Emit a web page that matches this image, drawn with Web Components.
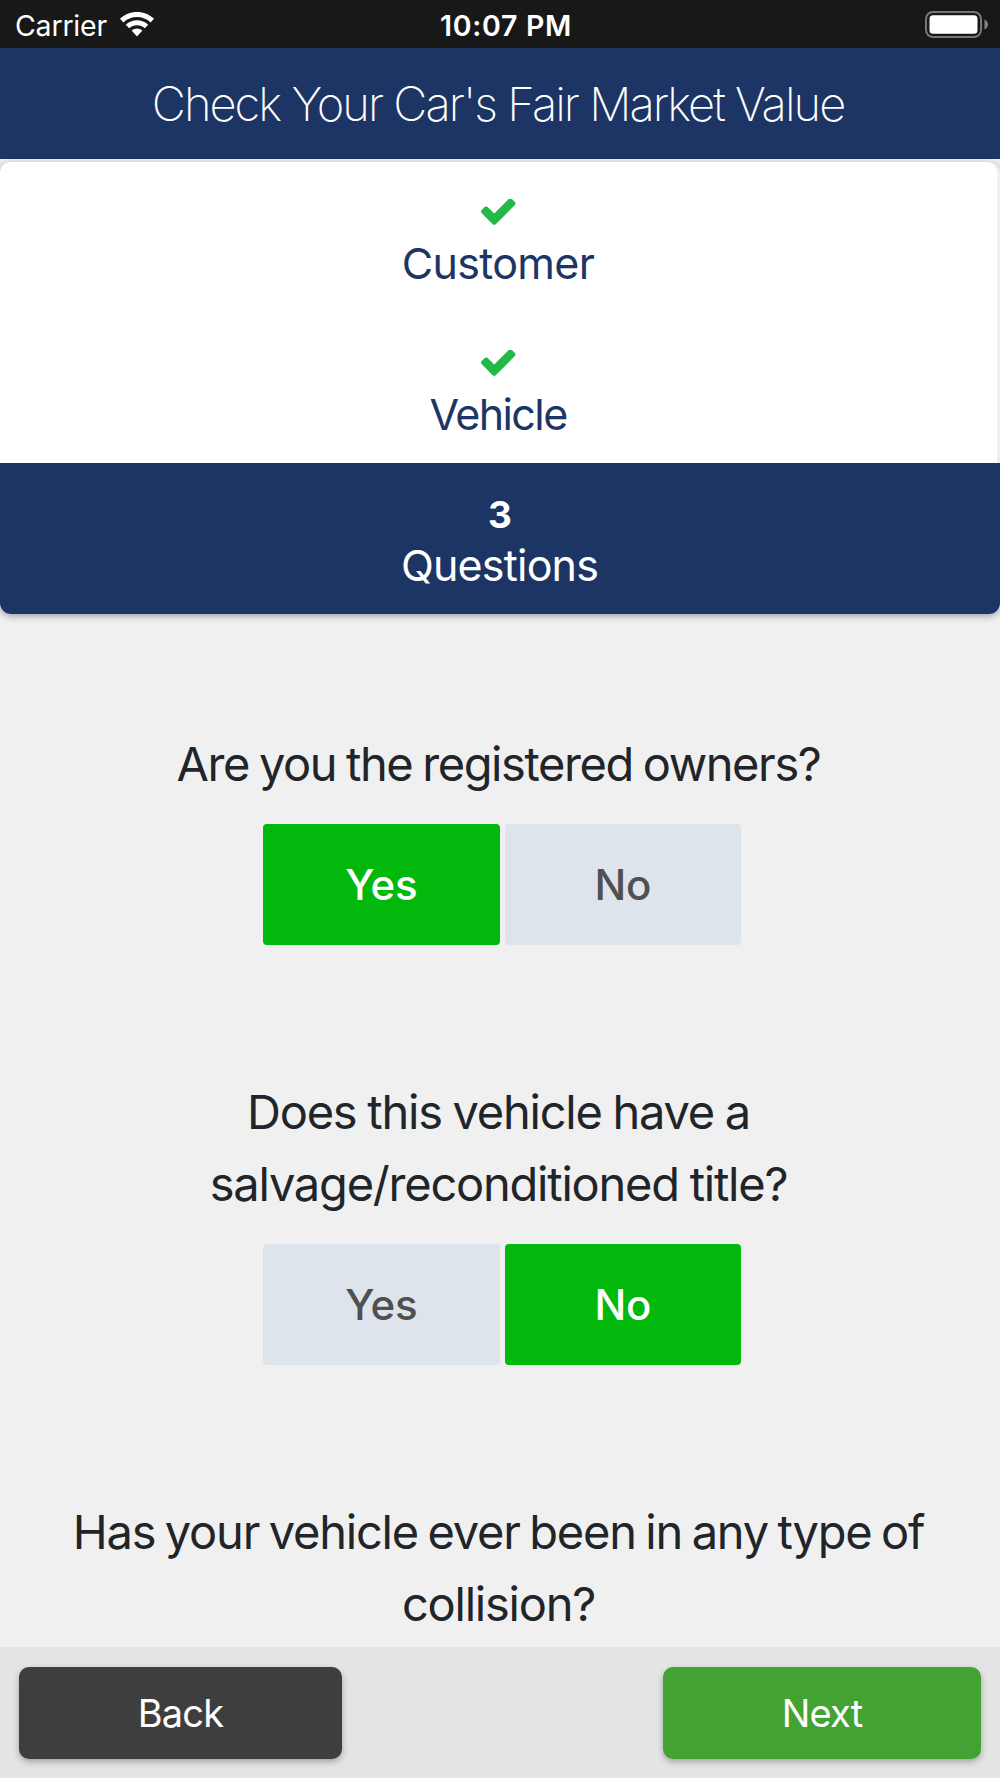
<!DOCTYPE html>
<html lang="en">
<head>
<meta charset="utf-8">
<title>Check Your Car's Fair Market Value</title>
<style>
  html, body {
    margin: 0;
    height: 100%;
  }
  body {
    overflow: hidden;
    background: #f0f0f0;
    color: #212529;
    font-family: Inter, "Liberation Sans", sans-serif;
  }
</style>
</head>
<body>
<market-value-app>
  <status-bar slot="top" carrier="Carrier" time="10:07 PM"></status-bar>
  <page-header slot="top">Check Your Car's Fair Market Value</page-header>
  <step-list slot="top">
    <step-item state="done">Customer</step-item>
    <step-item state="done" style="--tracking: -1.6px">Vehicle</step-item>
    <step-item state="active" number="3" style="--tracking: -0.8px">Questions</step-item>
  </step-list>
  <yes-no-question value="yes" style="--tracking: -1.4px; --word-gap: -2px">Are you the registered owners?</yes-no-question>
  <yes-no-question value="no" style="--word-gap: -1.2px">Does this vehicle have a<br>salvage/reconditioned title?</yes-no-question>
  <yes-no-question>Has your vehicle ever been in any type of<br>collision?</yes-no-question>
  <footer-nav slot="bottom">
    <nav-button slot="back">Back</nav-button>
    <nav-button slot="next" primary>Next</nav-button>
  </footer-nav>
</market-value-app>

<script>
class MarketValueApp extends HTMLElement {
  constructor() {
    super();

    this.attachShadow({ mode: "open" });

    this.shadowRoot.innerHTML = `
      <style>
        :host {
          display: flex;
          flex-direction: column;
          width: 1000px;
          height: 1778px;
        }
        main {
          flex: 1;
          min-height: 0;
          overflow: hidden;
          padding-top: 114px;
        }
      </style>
      <slot name="top"></slot>
      <main><slot></slot></main>
      <slot name="bottom"></slot>
    `;
  }
}

class StatusBar extends HTMLElement {
  constructor() {
    super();

    this.attachShadow({ mode: "open" });

    this.shadowRoot.innerHTML = `
      <style>
        :host {
          display: grid;
          grid-template-columns: 1fr auto 1fr;
          align-items: center;
          flex: none;
          height: 48px;
          padding: 0 12px 0 15px;
          box-sizing: border-box;
          background: #181818;
          color: #fff;
          font-size: 28.5px;
        }
        .left {
          display: flex;
          align-items: center;
          gap: 13px;
        }
        .carrier {
          padding-top: 2px;
          letter-spacing: -0.2px;
        }
        .time {
          font-weight: 600;
          letter-spacing: 0.7px;
          padding: 2px 0 0 9px;
        }
        svg {
          display: block;
        }
        .battery {
          justify-self: end;
        }
      </style>
      <div class="left">
        <span class="carrier"></span>
        <svg width="34" height="25" viewBox="0 0 34 25" fill="#fff">
          <path d="M17 0C10.4 0 4.500 2.600 0 6.800L3.400 10.400C7 7 11.800 5 17 5S27 7 30.600 10.400L34 6.800C29.500 2.600 23.600 0 17 0Z"/>
          <path d="M17 8.300C12.700 8.300 8.800 9.900 5.800 12.700L9.200 16.200C11.300 14.300 14 13.200 17 13.200S22.700 14.300 24.800 16.200L28.200 12.700C25.200 9.900 21.300 8.300 17 8.300Z"/>
          <path d="M17 16.500C14.900 16.500 13 17.300 11.600 18.600L17 24.500L22.400 18.600C21 17.300 19.100 16.500 17 16.500Z"/>
        </svg>
      </div>
      <span class="time"></span>
      <svg class="battery" width="63" height="27" viewBox="0 0 63 27">
        <rect x="1" y="1" width="55" height="25" rx="7" fill="none" stroke="#777" stroke-width="2"/>
        <rect x="4.500" y="4.200" width="48" height="18.600" rx="3.500" fill="#fff"/>
        <path d="M59.500 8.500C64 10.500 64 16.500 59.500 18.500Z" fill="#888"/>
      </svg>
    `;
  }

  connectedCallback() {
    this.shadowRoot.querySelector(".carrier").textContent = this.getAttribute("carrier");
    this.shadowRoot.querySelector(".time").textContent = this.getAttribute("time");
  }
}

class PageHeader extends HTMLElement {
  constructor() {
    super();

    this.attachShadow({ mode: "open" });

    this.shadowRoot.innerHTML = `
      <style>
        :host {
          display: flex;
          align-items: center;
          justify-content: center;
          flex: none;
          height: 111px;
          box-sizing: border-box;
          padding-right: 4px;
          background: #1d3564;
          color: #fff;
          font-size: 47px;
          font-weight: 200;
          letter-spacing: -1.95px;
          white-space: nowrap;
        }
      </style>
      <span><slot></slot></span>
    `;
  }
}

class StepList extends HTMLElement {
  constructor() {
    super();

    this.attachShadow({ mode: "open" });

    this.shadowRoot.innerHTML = `
      <style>
        :host {
          display: block;
          flex: none;
          margin-top: 3px;
          border-radius: 11px;
          box-shadow: 0 2px 7px rgba(0, 0, 0, 0.35);
        }
      </style>
      <slot></slot>
    `;
  }
}

class StepItem extends HTMLElement {
  constructor() {
    super();

    this.attachShadow({ mode: "open" });

    this.shadowRoot.innerHTML = `
      <style>
        :host {
          display: flex;
          flex-direction: column;
          align-items: center;
          box-sizing: border-box;
          width: 997px;
          height: 150.5px;
          padding-top: 31px;
          background: #fff;
          color: #1d3564;
        }
        :host(:first-child) {
          border-radius: 11px 11px 0 0;
        }
        :host([state="active"]) {
          width: 1000px;
          height: 151px;
          padding-top: 32px;
          background: #1d3564;
          color: #fff;
          border-radius: 0 0 11px 11px;
        }
        .mark {
          display: flex;
          align-items: center;
          height: 38px;
          font-size: 37px;
          font-weight: 700;
        }
        .label {
          padding-right: 1px;
          font-size: 43px;
          line-height: 64px;
          letter-spacing: var(--tracking, -0.65px);
        }
      </style>
      <div class="mark"></div>
      <div class="label"><slot></slot></div>
    `;
  }

  connectedCallback() {
    const mark = this.shadowRoot.querySelector(".mark");

    if (this.getAttribute("state") === "done") {
      mark.innerHTML = `
        <svg width="34.5" height="26" viewBox="121 374 1550 1148" fill="#22ba46">
          <path d="M1671 566q0 40-28 68l-724 724-136 136q-28 28-68 28t-68-28l-136-136-362-362q-28-28-28-68t28-68l136-136q28-28 68-28t68 28l294 295 656-657q28-28 68-28t68 28l136 136q28 28 28 68z"/>
        </svg>
      `;
    } else {
      mark.textContent = this.getAttribute("number");
    }
  }
}

class YesNoQuestion extends HTMLElement {
  constructor() {
    super();

    this.attachShadow({ mode: "open", delegatesFocus: true });

    this.shadowRoot.innerHTML = `
      <style>
        :host {
          display: block;
          text-align: center;
          margin-bottom: 130.7px;
        }
        .question {
          padding-right: 3px;
          font-size: 47px;
          line-height: 72.5px;
          letter-spacing: var(--tracking, -1.22px);
          word-spacing: var(--word-gap, -2.4px);
          white-space: nowrap;
        }
        .answers {
          display: flex;
          justify-content: center;
          gap: 5px;
          padding: 23.5px 0 0 4px;
        }
        button {
          width: 236.5px;
          height: 121px;
          padding: 0 0 1px;
          border: 0;
          border-radius: 4px;
          background: #dde4ec;
          color: #505050;
          font: 500 42px Inter, "Liberation Sans", sans-serif;
          letter-spacing: -0.3px;
        }
        button.selected {
          background: #03b80d;
          color: #fff;
        }
      </style>
      <div class="question"><slot></slot></div>
      <div class="answers">
        <button value="yes">Yes</button>
        <button value="no">No</button>
      </div>
    `;
  }

  connectedCallback() {
    this.select(this.getAttribute("value"));
    this.shadowRoot.querySelector(".answers").addEventListener("click", (event) => {
      if (event.target.value) this.select(event.target.value);
    });
  }

  select(value) {
    this.shadowRoot.querySelectorAll("button").forEach((button) => {
      button.classList.toggle("selected", button.value === value);
    });
  }
}

class FooterNav extends HTMLElement {
  constructor() {
    super();

    this.attachShadow({ mode: "open" });

    this.shadowRoot.innerHTML = `
      <style>
        :host {
          display: grid;
          grid-template-columns: 323px 318px;
          justify-content: space-between;
          flex: none;
          box-sizing: border-box;
          height: 131px;
          padding: 20px 19px;
          background: #e4e4e4;
        }
      </style>
      <slot name="back"></slot>
      <slot name="next"></slot>
    `;
  }
}

class NavButton extends HTMLElement {
  constructor() {
    super();

    this.attachShadow({ mode: "open", delegatesFocus: true });

    this.shadowRoot.innerHTML = `
      <style>
        :host {
          display: block;
        }
        button {
          display: block;
          width: 100%;
          height: 91.5px;
          padding: 1px 0 0;
          border: 0;
          border-radius: 10px;
          background: #3e3e3e;
          color: #fff;
          font: 400 38px Inter, "Liberation Sans", sans-serif;
          letter-spacing: -0.8px;
          box-shadow: 0 3px 6px rgba(0, 0, 0, 0.28);
        }
        :host([primary]) button {
          background: #42a332;
        }
      </style>
      <button><slot></slot></button>
    `;
  }
}

customElements.define("market-value-app", MarketValueApp);
customElements.define("status-bar", StatusBar);
customElements.define("page-header", PageHeader);
customElements.define("step-list", StepList);
customElements.define("step-item", StepItem);
customElements.define("yes-no-question", YesNoQuestion);
customElements.define("footer-nav", FooterNav);
customElements.define("nav-button", NavButton);
</script>
</body>
</html>
